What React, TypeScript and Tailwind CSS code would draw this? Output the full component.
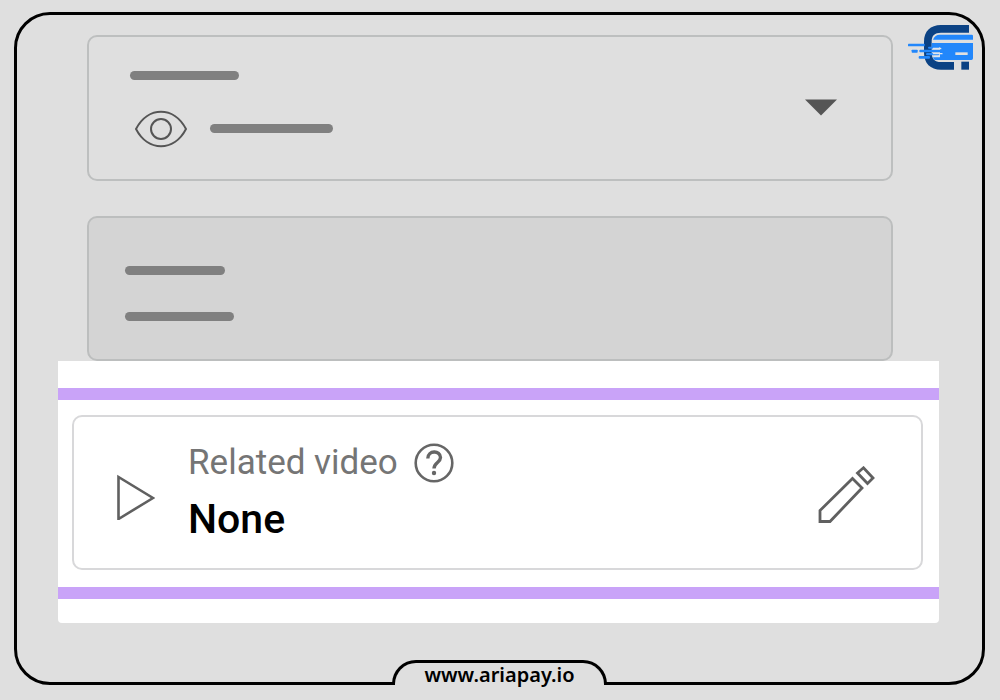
function Logo() {
  return (
    <svg viewBox="0 0 198 138" className="h-[46px] w-[66px]" aria-label="Ariapay" role="img">
      <path
        d="M183 3 H99 C67 3 48 22 48 53 V86 C48 117 67 137 99 137 H138 V114 H99 C80 114 71 104 71 86 V53 C71 34 80 26 99 26 H183 Z"
        fill="#0b4284"
      />
      <g fill="#2287fb">
        <path d="M75 47 Q81 32 95 32 H191 Q195 32 195 36 V47 Z" />
        <path d="M71 57 H195 V103 Q195 108 190 108 H82 Q76 108 76 102 V98 H96 V70 H71 Z" />
        <rect x="0" y="59" width="50" height="8" rx="2" />
        <rect x="11" y="77" width="18" height="9" rx="2" />
        <rect x="34" y="77" width="74" height="8" rx="3" />
        <rect x="32" y="96" width="34" height="8" rx="3" />
        <rect x="54" y="87" width="40" height="7" rx="3" />
        <rect x="60" y="68" width="34" height="6" rx="3" />
      </g>
      <g fill="#dfe5ee">
        <rect x="74" y="71" width="26" height="5" rx="2" />
        <rect x="74" y="87" width="30" height="4" rx="2" />
        <rect x="76" y="95" width="20" height="5" rx="2" />
      </g>
      <rect x="142" y="85" width="37" height="8" fill="#e0e0e0" />
      <rect x="160" y="113" width="23" height="24" fill="#0b4284" />
    </svg>
  );
}

function EyeIcon() {
  return (
    <svg viewBox="0 0 54 38" className="h-[38px] w-[54px]" fill="none" stroke="#555555" strokeWidth="2" strokeLinejoin="round" aria-hidden="true">
      <path d="M2 19 C14 -4 40 -4 52 19 C40 42 14 42 2 19 Z" />
      <circle cx="27" cy="19" r="10" />
    </svg>
  );
}

function HelpIcon() {
  return (
    <svg viewBox="0 0 40 40" className="size-10" fill="none" stroke="#666666" aria-hidden="true">
      <circle cx="20" cy="20" r="18.3" strokeWidth="2.6" />
      <path d="M13.8 15.5 C13.8 7 26.5 7 26.5 14.5 C26.5 19.5 20 19.5 20 25.5" strokeWidth="3.4" />
      <circle cx="20" cy="30" r="2.2" fill="#666666" stroke="none" />
    </svg>
  );
}

function PencilIcon() {
  return (
    <svg viewBox="0 0 58 58" className="size-[58px]" fill="none" stroke="#606060" strokeWidth="2.8" aria-hidden="true">
      <path d="M3 55.5 V44.5 L35.5 12.5 L45 22 L13 55.5 Z" />
      <path d="M40.5 7 L46.5 1.8 L56 12 L50.5 17.5 Z" />
    </svg>
  );
}

export default function App() {
  return (
    <div className="flex min-h-screen flex-col bg-[#dfdfdf] pt-3 pr-[15px] pb-[15px] pl-3.5 font-['Roboto',sans-serif]">
      <div className="relative flex grow flex-col rounded-[36px] border-3 border-black">
        <div className="absolute top-[9px] right-2">
          <Logo />
        </div>

        <main className="mr-[43px] ml-[41px] flex flex-col pt-5">
          <div className="mr-[46px] ml-[29px] flex flex-col gap-[35px]">
            <button
              type="button"
              aria-label="Visibility"
              className="flex h-[146px] items-start justify-between rounded-[10px] border-2 border-[#bdbfbf] pt-[34px] pr-[54px] pl-[41px]"
            >
              <span className="flex flex-col gap-11">
                <span className="h-[9px] w-[109px] rounded-full bg-[#808080]" />
                <span className="flex h-[9px] items-center gap-[22px] pl-1">
                  <EyeIcon />
                  <span className="h-[9px] w-[123px] rounded-full bg-[#808080]" />
                </span>
              </span>
              <svg viewBox="0 0 32 17" className="mt-7 h-[17px] w-8" fill="#555555" aria-hidden="true">
                <path d="M0 0.5 H32 L16 16.5 Z" />
              </svg>
            </button>

            <section className="flex h-[145px] flex-col gap-[37px] rounded-[10px] border-2 border-[#bcbebe] bg-[#d4d4d4] pt-12 pl-9">
              <span className="h-[9px] w-[100px] rounded-full bg-[#808080]" />
              <span className="h-[9px] w-[109px] rounded-full bg-[#808080]" />
            </section>
          </div>

          <section className="flex flex-col rounded-b-sm bg-white pt-[27px] pb-6">
            <div className="border-y-12 border-[#c9a3f8] px-3.5 pt-[15px] pb-[17px]">
              <div className="mr-0.5 flex h-[155px] items-center rounded-[10px] border-2 border-[#d8d8da] pr-[46px] pl-[43px]">
                <svg viewBox="0 0 38 46" className="mt-2 h-[46px] w-[38px] shrink-0" fill="none" stroke="#606060" strokeWidth="2.6" aria-hidden="true">
                  <path d="M1.5 3 V45 L36 24 Z" />
                </svg>
                <div className="ml-[33px] grow pb-1">
                  <div className="flex items-center gap-4">
                    <h2 className="text-[35px] leading-[56px] text-[#757575]">Related video</h2>
                    <button type="button" aria-label="Help">
                      <HelpIcon />
                    </button>
                  </div>
                  <p className="text-[41px] leading-[56px] font-medium text-black">None</p>
                </div>
                <button type="button" aria-label="Edit related video" className="mt-1 shrink-0">
                  <PencilIcon />
                </button>
              </div>
            </div>
          </section>
        </main>

        <footer className="absolute inset-x-0 -bottom-[3px] flex justify-center">
          <a
            href="https://www.ariapay.io"
            className="flex h-[25px] w-[215px] justify-center rounded-t-3xl border-x-3 border-t-3 border-black bg-[#dfdfdf] font-['Noto_Sans',sans-serif] text-[20px] leading-6 font-semibold text-black"
          >
            www.ariapay.io
          </a>
        </footer>
      </div>
    </div>
  );
}
